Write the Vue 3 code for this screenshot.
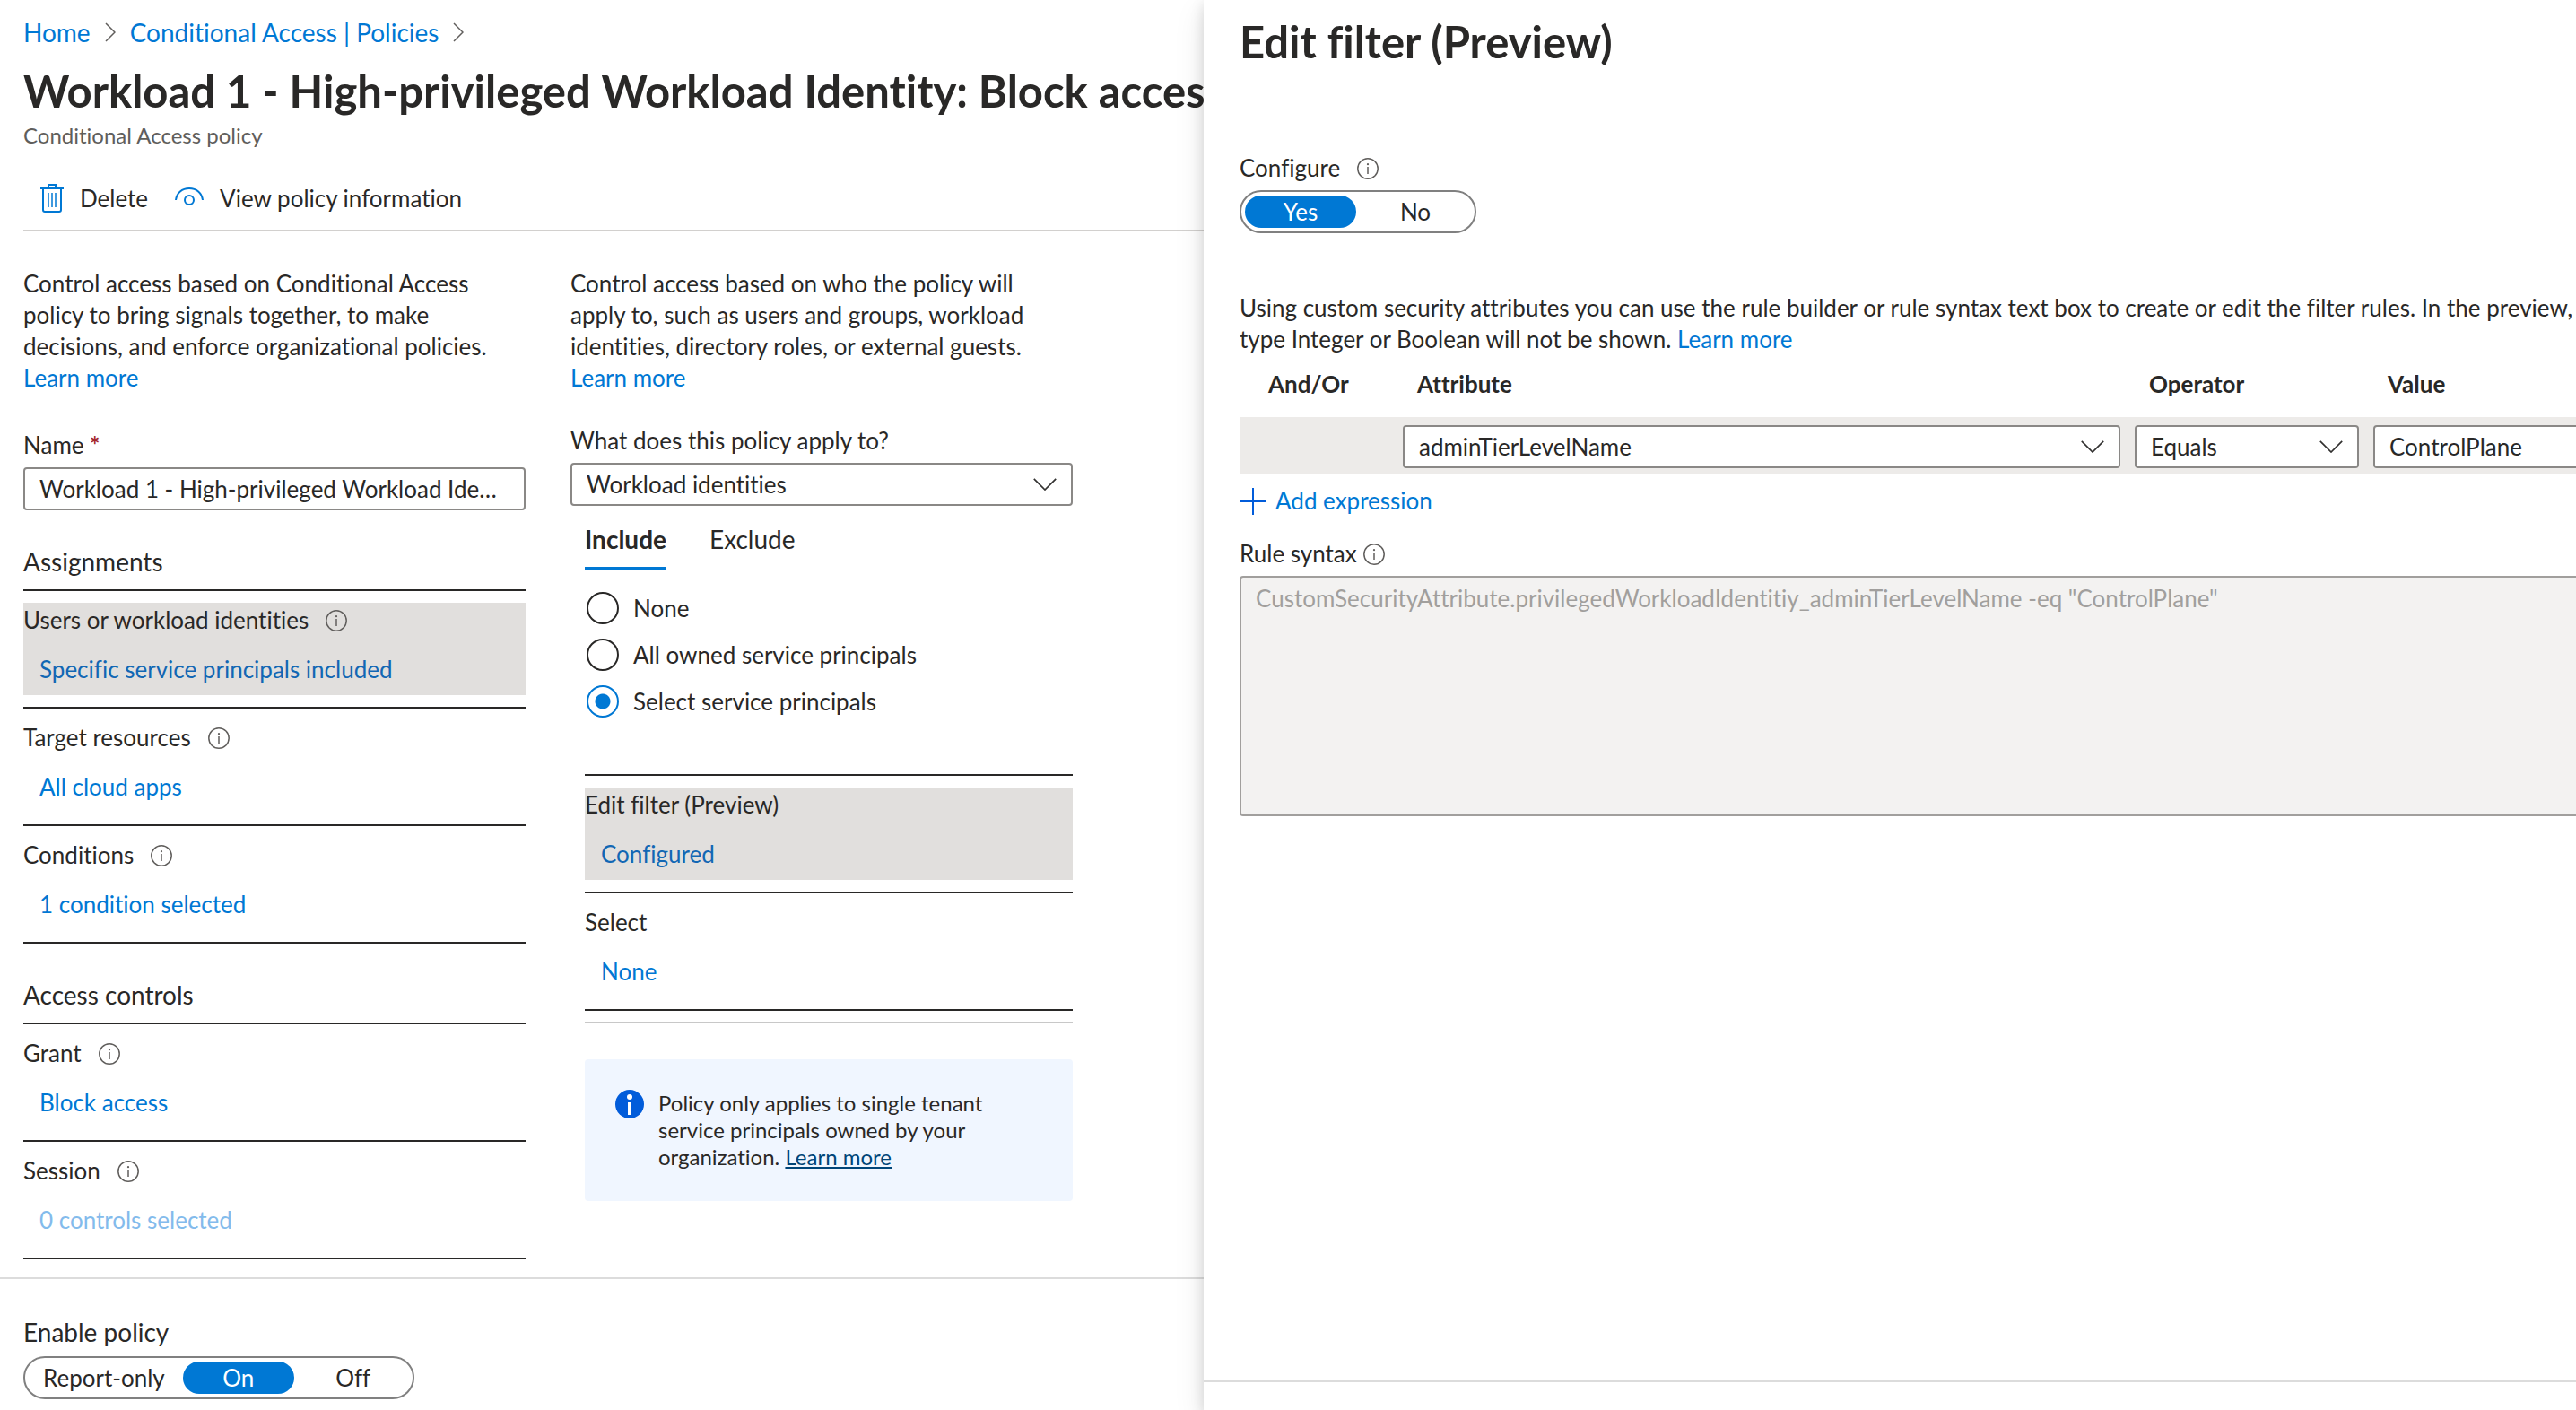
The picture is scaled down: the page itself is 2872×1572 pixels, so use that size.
<script setup>
import { h, ref } from 'vue'

const InfoIcon = () =>
  h('svg', { width: 24, height: 24, viewBox: '0 0 24 24', fill: 'none', 'aria-hidden': 'true' }, [
    h('circle', { cx: 12, cy: 12, r: 11.2, stroke: '#605e5c', 'stroke-width': 1.5 }),
    h('circle', { cx: 12, cy: 7.2, r: 1.1, fill: '#605e5c' }),
    h('path', { d: 'M12 10v8', stroke: '#605e5c', 'stroke-width': 1.5 }),
  ])

const Chevron = () =>
  h('svg', { width: 26, height: 14, viewBox: '0 0 26 14', fill: 'none', 'aria-hidden': 'true' }, [
    h('path', { d: 'M0.8 0.8 13 13 25.2 0.8', stroke: '#323130', 'stroke-width': 1.7 }),
  ])

const Crumb = () =>
  h('svg', { width: 12, height: 22, viewBox: '0 0 12 22', fill: 'none', 'aria-hidden': 'true' }, [
    h('path', { d: 'M1 1 11 11 1 21', stroke: '#605e5c', 'stroke-width': 1.5 }),
  ])

const policyName = ref('Workload 1 - High-privileged Workload Identity: Block access')
const appliesTo = ref('Workload identities')
const principals = ref('select')
const tab = ref('Include')
const enable = ref('On')
const configure = ref('Yes')
const attribute = ref('adminTierLevelName')
const operator = ref('Equals')
const value = ref('ControlPlane')
const rule = ref('CustomSecurityAttribute.privilegedWorkloadIdentitiy_adminTierLevelName -eq "ControlPlane"')

const sections = [
  {
    title: 'Assignments',
    items: [
      { label: 'Users or workload identities', link: 'Specific service principals included', active: true },
      { label: 'Target resources', link: 'All cloud apps' },
      { label: 'Conditions', link: '1 condition selected' },
    ],
  },
  {
    title: 'Access controls',
    items: [
      { label: 'Grant', link: 'Block access' },
      { label: 'Session', link: '0 controls selected', muted: true },
    ],
  },
]

const filterItems = [
  { label: 'Edit filter (Preview)', link: 'Configured', active: true },
  { label: 'Select', link: 'None' },
]

const radios = [
  { id: 'none', text: 'None' },
  { id: 'all', text: 'All owned service principals' },
  { id: 'select', text: 'Select service principals' },
]
</script>

<template>
  <div class="page">
    <main class="blade">
      <nav class="crumbs" aria-label="Breadcrumb">
        <a href="#">Home</a><Crumb /><a href="#">Conditional Access | Policies</a><Crumb />
      </nav>
      <h1 class="title">Workload 1 - High-privileged Workload Identity: Block access</h1>
      <p class="subtitle">Conditional Access policy</p>

      <div class="toolbar">
        <button type="button" class="tool">
          <svg width="26" height="32" viewBox="0 0 26 32" fill="none" stroke="#0078d4" stroke-width="2" aria-hidden="true">
            <path d="M0 5h26M9 5V1h8v4M3 5v24q0 2 2 2h16q2 0 2-2V5" />
            <path d="M9 10v16M13 10v16M17 10v16" stroke-width="1.5" />
          </svg>
          Delete
        </button>
        <button type="button" class="tool">
          <svg width="32" height="24" viewBox="0 0 32 24" fill="none" stroke="#0078d4" stroke-width="2" aria-hidden="true">
            <path d="M1 14C2 6 8 1 16 1s14 5 15 13" />
            <circle cx="16" cy="14" r="5" />
          </svg>
          View policy information
        </button>
      </div>

      <div class="columns">
        <div class="col">
          <p class="text">
            Control access based on Conditional Access policy to bring signals together, to make decisions, and
            enforce organizational policies.<br /><a href="#">Learn more</a>
          </p>
          <div class="field name">
            <label for="policy-name">Name <span class="required">*</span></label>
            <input id="policy-name" v-model="policyName" class="box" type="text" />
          </div>

          <section v-for="s in sections" :key="s.title" class="section">
            <h2>{{ s.title }}</h2>
            <div class="items">
              <div v-for="i in s.items" :key="i.label" class="item">
                <div class="item-body" :class="{ active: i.active, muted: i.muted }">
                  <span class="label">{{ i.label }}<InfoIcon /></span>
                  <a href="#">{{ i.link }}</a>
                </div>
              </div>
            </div>
          </section>
        </div>

        <div class="col">
          <p class="text">
            Control access based on who the policy will apply to, such as users and groups, workload identities,
            directory roles, or external guests.<br /><a href="#">Learn more</a>
          </p>
          <div class="field applies">
            <label for="applies-to">What does this policy apply to?</label>
            <div class="select">
              <select id="applies-to" v-model="appliesTo" class="box">
                <option>Workload identities</option>
              </select>
              <Chevron />
            </div>
          </div>

          <div class="inner">
            <div class="tabs" role="tablist">
              <button
                v-for="t in ['Include', 'Exclude']"
                :key="t"
                type="button"
                role="tab"
                :aria-selected="tab === t"
                :class="{ current: tab === t }"
                @click="tab = t"
              >{{ t }}</button>
            </div>
            <div class="radios" role="radiogroup" aria-label="Service principals">
              <label v-for="r in radios" :key="r.id">
                <input v-model="principals" type="radio" name="principals" :value="r.id" />{{ r.text }}
              </label>
            </div>
            <div class="items">
              <div v-for="i in filterItems" :key="i.label" class="item">
                <div class="item-body" :class="{ active: i.active }">
                  <span class="label">{{ i.label }}</span>
                  <a href="#">{{ i.link }}</a>
                </div>
              </div>
            </div>
            <hr class="rule" />
            <div class="notice">
              <svg width="32" height="32" viewBox="0 0 32 32" aria-hidden="true">
                <circle cx="16" cy="16" r="16" fill="#015cda" />
                <circle cx="16" cy="8" r="3" fill="#fff" />
                <path d="M14 14h4v14h-4z" fill="#fff" />
              </svg>
              <p>
                Policy only applies to single tenant service principals owned by your organization.
                <a href="#">Learn more</a>
              </p>
            </div>
          </div>
        </div>
      </div>

      <footer class="enable">
        <h2 id="enable-label">Enable policy</h2>
        <div class="toggle" role="group" aria-labelledby="enable-label">
          <button
            v-for="o in ['Report-only', 'On', 'Off']"
            :key="o"
            type="button"
            :aria-pressed="enable === o"
            :class="{ on: enable === o }"
            @click="enable = o"
          >{{ o }}</button>
        </div>
      </footer>
    </main>

    <aside class="panel">
      <div class="panel-body">
        <h1 class="title">Edit filter (Preview)</h1>
        <div class="configure">
          <span id="configure-label" class="label">Configure<InfoIcon /></span>
          <div class="toggle" role="group" aria-labelledby="configure-label">
            <button
              v-for="o in ['Yes', 'No']"
              :key="o"
              type="button"
              :aria-pressed="configure === o"
              :class="{ on: configure === o }"
              @click="configure = o"
            >{{ o }}</button>
          </div>
        </div>
        <p class="text">
          Using custom security attributes you can use the rule builder or rule syntax text box to create or edit the
          filter rules. In the preview, attributes of<br />type Integer or Boolean will not be shown.
          <a href="#">Learn more</a>
        </p>
        <table>
          <colgroup>
            <col class="c-and" /><col /><col class="c-op" /><col class="c-val" />
          </colgroup>
          <thead>
            <tr><th class="first">And/Or</th><th>Attribute</th><th>Operator</th><th>Value</th></tr>
          </thead>
          <tbody>
            <tr>
              <td></td>
              <td>
                <div class="select">
                  <select v-model="attribute" class="box" aria-label="Attribute"><option>adminTierLevelName</option></select>
                  <Chevron />
                </div>
              </td>
              <td>
                <div class="select">
                  <select v-model="operator" class="box" aria-label="Operator"><option>Equals</option></select>
                  <Chevron />
                </div>
              </td>
              <td><input v-model="value" class="box" type="text" aria-label="Value" /></td>
            </tr>
          </tbody>
        </table>
        <button type="button" class="add">
          <svg width="30" height="30" viewBox="0 0 30 30" stroke="#015cda" stroke-width="2" aria-hidden="true">
            <path d="M15 0v30M0 15h30" />
          </svg>
          Add expression
        </button>
        <div class="field syntax">
          <label class="label tight" for="rule-syntax">Rule syntax<InfoIcon /></label>
          <textarea id="rule-syntax" v-model="rule" disabled></textarea>
        </div>
      </div>
      <footer class="panel-foot"></footer>
    </aside>
  </div>
</template>

<style>
body {
  background: #fff;
}
</style>

<style scoped>
.page {
  display: grid;
  grid-template-columns: minmax(0, 1342fr) minmax(0, 1530fr);
  min-height: 100vh;
  overflow: hidden;
  color: #292827;
  font: 26px/35px Lato, "Open Sans", sans-serif;
  font-variant-ligatures: none;
}
.page * {
  box-sizing: border-box;
}
h1, h2, p {
  margin: 0;
}
a {
  color: #0078d4;
  text-decoration: none;
}
button, input, select, textarea {
  margin: 0;
  font: inherit;
  font-variant-ligatures: none;
  color: inherit;
}
button {
  padding: 0;
  border: 0;
  background: none;
  cursor: pointer;
}
svg {
  flex: none;
}

.blade {
  display: flex;
  flex-direction: column;
  padding-top: 18px;
}
.crumbs {
  display: flex;
  align-items: center;
  gap: 16px;
  padding-left: 26px;
  font-size: 28px;
  line-height: 36px;
}
.title {
  font-size: 49px;
  line-height: 60px;
  font-weight: 700;
  white-space: nowrap;
}
.blade .title {
  margin-top: 17px;
  padding-left: 26px;
  overflow: hidden;
}
.subtitle {
  margin-top: 4px;
  padding-left: 26px;
  font-size: 24px;
  line-height: 32px;
  color: #605e5c;
}
.toolbar {
  display: flex;
  gap: 30px;
  height: 73px;
  margin: 18px 0 0 26px;
  padding: 1px 0 0 19px;
  border-bottom: 2px solid #d2d0ce;
}
.tool {
  display: flex;
  align-items: center;
  gap: 18px;
}

.columns {
  display: grid;
  grid-template-columns: repeat(2, minmax(0, 560px));
  gap: 50px;
  padding: 41px 26px 18px;
}
.field {
  display: flex;
  flex-direction: column;
  gap: 7px;
}
.name {
  margin-top: 40px;
}
.applies {
  margin-top: 35px;
}
.required {
  color: #a4262c;
  font-weight: 700;
}
.box {
  display: block;
  width: 100%;
  height: 48px;
  padding: 0 16px;
  border: 2px solid #8a8886;
  border-radius: 4px;
  background: #fff;
  text-overflow: ellipsis;
  appearance: none;
}
.select {
  position: relative;
}
.select svg {
  position: absolute;
  right: 18px;
  top: 17px;
  pointer-events: none;
}

.section {
  margin-top: 39px;
}
h2 {
  font-size: 28px;
  line-height: 36px;
  font-weight: 400;
}
.section h2 {
  margin-bottom: 13px;
}
.items {
  border-bottom: 2px solid #292827;
}
.item {
  padding: 13px 0;
  border-top: 2px solid #292827;
}
.item-body {
  display: flex;
  flex-direction: column;
  gap: 20px;
  padding: 2px 0 11px;
}
.item-body a {
  padding-left: 18px;
}
.active {
  background: #e1dfdd;
}
.active a {
  color: #1267b4;
}
.muted a {
  color: #83bbec;
}
.label {
  display: flex;
  align-items: center;
  gap: 19px;
}
.tight {
  gap: 7px;
}

.inner {
  padding-left: 16px;
}
.tabs {
  display: flex;
  gap: 48px;
  margin-top: 19px;
}
.tabs button {
  padding-bottom: 13px;
  border-bottom: 4px solid transparent;
  font-size: 28px;
  line-height: 36px;
}
.tabs .current {
  border-color: #0078d4;
  font-weight: 700;
}
.radios {
  display: flex;
  flex-direction: column;
  gap: 16px;
  margin: 24px 0 63px;
}
.radios label {
  display: flex;
  align-items: center;
  gap: 16px;
  height: 36px;
  padding-left: 2px;
}
.radios input {
  width: 36px;
  height: 36px;
  border: 2px solid #292827;
  border-radius: 50%;
  background: #fff;
  appearance: none;
}
.radios input:checked {
  border-color: #0078d4;
  background: radial-gradient(circle, #0078d4 8px, #fff 9px);
}
.rule {
  margin: 12px 0 40px;
  border: 0;
  border-top: 2px solid #c8c8c8;
}
.notice {
  display: flex;
  gap: 16px;
  padding: 34px 32px 34px 34px;
  border-radius: 4px;
  background: #f0f6ff;
  font-size: 24px;
  line-height: 30px;
}
.notice a {
  color: #004578;
  text-decoration: underline;
}

.enable {
  margin-top: auto;
  padding: 41px 26px 12px;
  border-top: 2px solid #dcdcdc;
}
.enable h2 {
  margin-bottom: 9px;
}
.toggle {
  display: inline-flex;
  vertical-align: top;
  gap: 4px;
  padding: 4px;
  border: 2px solid #808080;
  border-radius: 24px;
}
.toggle button {
  min-width: 124px;
  height: 36px;
  padding: 0 16px;
  border-radius: 18px;
}
.toggle .on {
  background: #0078d4;
  color: #fff;
}

.panel {
  display: flex;
  flex-direction: column;
  position: relative;
  background: #fff;
  box-shadow: 0 12px 32px rgba(0, 0, 0, 0.1), 0 4px 14px rgba(0, 0, 0, 0.13);
}
.panel-body {
  margin-right: -180px;
  padding: 16px 0 0 40px;
}
.configure {
  display: flex;
  flex-direction: column;
  align-items: flex-start;
  gap: 7px;
  margin: 94px 0 66px;
}
table {
  width: 100%;
  margin-top: 15px;
  table-layout: fixed;
  border-collapse: collapse;
}
.c-and {
  width: 182px;
}
.c-op {
  width: 266px;
}
.c-val {
  width: 406px;
}
th {
  padding: 0 0 19px 16px;
  font-weight: 700;
  text-align: left;
}
th.first {
  padding-left: 32px;
}
tbody tr {
  background: #edebe9;
}
td {
  padding: 9px 16px 7px 0;
}
.add {
  display: flex;
  align-items: center;
  gap: 10px;
  margin-top: 12px;
  color: #0078d4;
}
.syntax {
  margin-top: 24px;
}
textarea {
  display: block;
  width: 100%;
  height: 268px;
  padding: 6px 16px;
  border: 2px solid #a19f9d;
  border-radius: 4px;
  background: #f3f2f1;
  color: #a19f9d;
  resize: none;
}
.panel-foot {
  height: 33px;
  margin-top: auto;
  border-top: 2px solid #dcdcdc;
}
</style>
